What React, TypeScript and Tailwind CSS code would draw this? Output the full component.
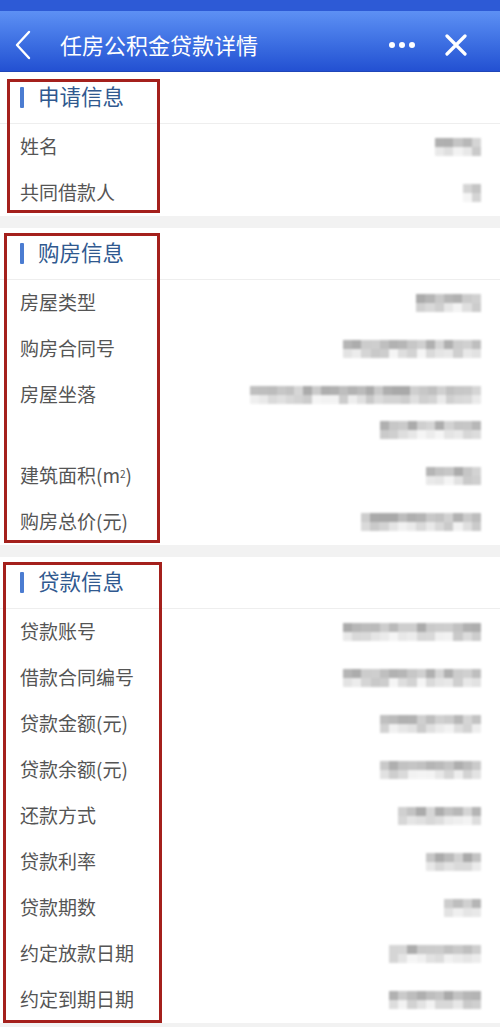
import React from "react";

const FONT = { fontFamily: '"Noto Sans CJK SC", "Noto Sans", sans-serif' };

function rand(seed: number) {
  let s = seed * 9301 + 49297;
  return () => {
    s = (s * 9301 + 49297) % 233280;
    return s / 233280;
  };
}

function Mosaic({ width, seed }: { width: number; seed: number }) {
  const cols = Math.max(2, Math.round(width / 9));
  const r = rand(seed);
  const rows = [0, 1].map((ri) =>
    Array.from({ length: cols }, () => {
      const v = r();
      const base = ri === 0 ? 160 : 195;
      const g = Math.round(base + v * 50);
      return `rgb(${g},${g},${g})`;
    })
  );
  return (
    <div className="flex flex-col blur-[1px] opacity-90" style={{ width }}>
      {rows.map((row, i) => (
        <div key={i} className="flex h-[9px]">
          {row.map((c, j) => (
            <div key={j} className="flex-1 h-full" style={{ background: c }} />
          ))}
        </div>
      ))}
    </div>
  );
}

type Row = { label: React.ReactNode; w: number; w2?: number };

function Section({
  title,
  rows,
  box,
}: {
  title: string;
  rows: Row[];
  box: string;
}) {
  return (
    <div className="relative bg-white">
      <div className="h-[52px] flex items-center border-b border-[#eeeeee] pl-[20px]">
        <div className="w-[4px] h-[21px] bg-[#4b7cd1] rounded-[1px]" />
        <span className="ml-[14px] text-[21.5px] text-[#30598f] leading-none pb-[3px]">{title}</span>
      </div>
      {rows.map((r, i) =>
        r.w2 ? (
          <div key={i} className="h-[81px] flex justify-between pl-[20px] pr-[19px] pt-[8px]">
            <span className="text-[19px] text-[#555555] leading-[28px]">{r.label}</span>
            <div className="flex flex-col items-end gap-[17px] pt-[6px]">
              <Mosaic width={r.w} seed={i * 7 + r.w} />
              <Mosaic width={r.w2} seed={i * 3 + r.w2} />
            </div>
          </div>
        ) : (
          <div key={i} className="h-[46px] flex items-center justify-between pl-[20px] pr-[19px]">
            <span className="text-[19px] text-[#555555] leading-none pb-[3px]">{r.label}</span>
            <Mosaic width={r.w} seed={i * 11 + r.w} />
          </div>
        )
      )}
      <div className={`absolute border-[3px] border-[#a4201c] pointer-events-none ${box}`} />
    </div>
  );
}

export default function App() {
  return (
    <div className="w-[500px] min-h-[1027px] bg-[#f2f2f2]" style={FONT}>
      <div className="h-[11px] bg-[#2d5ad6]" />
      <div className="h-[61px] bg-gradient-to-b from-[#5d90f4] to-[#2350d2] flex items-center pt-[8px] border-b border-[#1f46b8]">
        <svg width="18" height="30" viewBox="0 0 18 30" className="ml-[14px]">
          <polyline points="15,2 3,15 15,28" fill="none" stroke="white" strokeWidth="2.4" strokeLinecap="round" strokeLinejoin="round" />
        </svg>
        <span className="ml-[28px] text-[22px] text-white leading-none pb-[3px]">任房公积金贷款详情</span>
        <div className="ml-auto flex items-center gap-[4px] mr-[30px]">
          <div className="w-[6px] h-[6px] rounded-full bg-white" />
          <div className="w-[6px] h-[6px] rounded-full bg-white" />
          <div className="w-[6px] h-[6px] rounded-full bg-white" />
        </div>
        <svg width="22" height="22" viewBox="0 0 22 22" className="mr-[33px]">
          <path d="M2 2 L20 20 M20 2 L2 20" stroke="white" strokeWidth="3.2" strokeLinecap="round" />
        </svg>
      </div>

      <Section
        title="申请信息"
        box="top-[7px] left-[7px] w-[153px] h-[134px]"
        rows={[
          { label: "姓名", w: 46 },
          { label: "共同借款人", w: 18 },
        ]}
      />
      <div className="h-[12px]" />
      <Section
        title="购房信息"
        box="top-[5px] left-[4px] w-[156px] h-[310px]"
        rows={[
          { label: "房屋类型", w: 65 },
          { label: "购房合同号", w: 138 },
          { label: "房屋坐落", w: 231, w2: 101 },
          {
            label: (
              <>
                建筑面积(m<sup className="text-[10px]">2</sup>)
              </>
            ),
            w: 55,
          },
          { label: "购房总价(元)", w: 120 },
        ]}
      />
      <div className="h-[12px]" />
      <Section
        title="贷款信息"
        box="top-[5px] left-[3px] w-[159px] h-[461px]"
        rows={[
          { label: "贷款账号", w: 138 },
          { label: "借款合同编号", w: 138 },
          { label: "贷款金额(元)", w: 101 },
          { label: "贷款余额(元)", w: 101 },
          { label: "还款方式", w: 83 },
          { label: "贷款利率", w: 55 },
          { label: "贷款期数", w: 37 },
          { label: "约定放款日期", w: 92 },
          { label: "约定到期日期", w: 92 },
        ]}
      />
    </div>
  );
}
